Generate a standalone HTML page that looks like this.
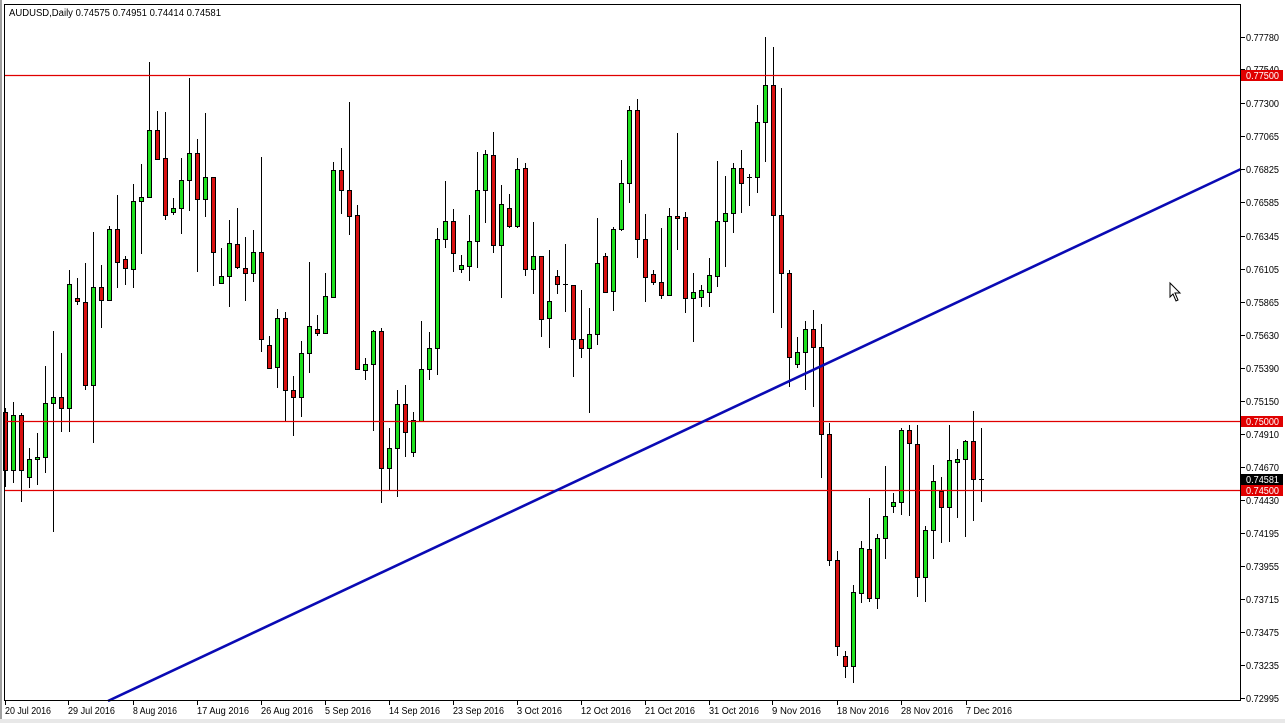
<!DOCTYPE html>
<html><head><meta charset="utf-8">
<style>
html,body{margin:0;padding:0;background:#fff;width:1285px;height:723px;overflow:hidden}
svg{display:block}
text{font-family:"Liberation Sans",sans-serif;font-size:10px;fill:#000}
</style></head><body>
<svg id="s" width="1285" height="723" xmlns="http://www.w3.org/2000/svg">
<rect x="0" y="0" width="1285" height="723" fill="#fff"/>
<rect x="0" y="0" width="2" height="723" fill="#a0a0a0"/>
<rect x="0" y="719" width="1285" height="4" fill="#e8e8e8"/>
<g id="c"></g>
<line x1="4" y1="75.5" x2="1241" y2="75.5" style="stroke:#e00000;stroke-width:1.2"/>
<line x1="4" y1="421.5" x2="1241" y2="421.5" style="stroke:#e00000;stroke-width:1.2"/>
<line x1="4" y1="490.5" x2="1241" y2="490.5" style="stroke:#e00000;stroke-width:1.2"/>
<line x1="108" y1="701" x2="1241" y2="169" stroke="#0a0ab4" stroke-width="2.6"/>
<rect x="4.5" y="4.5" width="1236" height="696" fill="none" stroke="#000" stroke-width="1"/>
<text x="9" y="16" textLength="212" lengthAdjust="spacingAndGlyphs">AUDUSD,Daily  0.74575 0.74951 0.74414 0.74581</text>
<g id="ax"></g>
<path d="M1170 283 L1170 297 L1173 294 L1176 301 L1178 300 L1175 293 L1180 293 Z" fill="#fff" stroke="#000" stroke-width="1"/>
</svg>
<script>
var d=[
['r',412,470,408,487],['g',415,470,402,483],['r',415,470,413,502],['g',459,477,448,488],['g',457,459,433,485],
['g',403,457,366,473],['g',397,403,331,532],['r',397,408,353,432],['g',284,408,270,432],['r',298,301,278,305],
['r',302,385,263,390],['g',287,385,232,443],['r',287,300,265,328],['g',229,300,226,301],['r',229,262,195,288],
['r',259,268,256,285],['g',201,269,184,288],['g',197,201,164,254],['g',130,197,62,197],['r',130,159,111,160],
['r',158,215,112,220],['g',208,212,198,215],['g',180,208,158,234],['g',153,180,78,211],['r',153,199,139,272],
['g',177,199,113,217],['r',177,252,177,286],['g',276,283,248,283],['g',243,276,220,307],['r',244,267,208,269],
['r',268,273,237,301],['g',252,273,230,282],['r',252,339,157,352],['r',345,368,336,368],['g',318,367,309,388],
['r',318,390,312,422],['r',390,397,376,436],['g',353,397,341,417],['g',326,353,262,373],['r',329,333,315,336],
['g',296,333,273,333],['g',170,297,162,297],['r',170,190,148,214],['r',190,216,102,235],['r',215,369,205,370],
['g',364,370,358,380],['g',331,364,330,431],['r',331,468,328,503],['g',448,468,428,490],['g',404,448,390,497],
['r',404,432,385,457],['g',420,452,412,457],['g',369,421,321,421],['g',348,369,332,380],['g',239,348,228,375],
['g',221,239,181,248],['r',221,253,209,272],['g',265,269,255,273],['g',241,266,215,281],['g',190,241,152,268],
['g',154,190,150,223],['r',155,245,132,253],['g',204,245,185,298],['r',208,226,194,228],['g',169,226,158,228],
['r',168,269,163,276],['g',256,269,222,294],['r',256,319,256,337],['g',301,318,250,348],['r',276,284,270,294],
['d',284,284,244,312],['r',285,339,285,377],['r',339,348,290,358],['g',334,348,308,413],['g',263,334,218,345],
['r',256,292,253,293],['g',229,291,227,311],['g',183,229,160,231],['g',110,183,106,203],['r',110,239,99,258],
['r',239,277,214,302],['r',274,282,270,285],['r',282,295,228,299],['g',216,295,208,295],['r',216,218,133,250],
['r',217,298,212,313],['g',292,298,273,342],['g',290,297,285,307],['g',275,292,258,307],['g',221,276,161,287],
['g',213,221,176,267],['g',168,213,163,233],['r',168,183,150,213],['d',177,177,174,206],['g',122,177,105,193],
['g',85,122,37,162],['r',85,215,47,313],['r',215,273,88,328],['r',273,357,270,387],['g',352,364,337,368],
['g',329,352,321,390],['r',329,347,310,407],['r',347,434,324,478],['r',434,560,423,566],['r',560,646,551,656],
['r',656,666,651,678],['g',592,666,585,683],['g',548,593,541,603],['r',549,598,498,602],['g',538,598,534,609],
['g',516,538,466,559],['g',502,506,493,513],['g',430,502,428,515],['r',430,443,425,516],['r',444,577,425,597],
['g',530,577,526,602],['g',481,530,465,559],['r',491,507,477,543],['g',460,507,425,542],['g',459,462,449,518],
['g',441,459,440,537],['r',441,479,411,521],['d',479,479,428,502]];
var h='';
for(var i=0;i<d.length;i++){var x=5+8*i,c=d[i];
h+='<line x1="'+(x+.5)+'" y1="'+c[3]+'" x2="'+(x+.5)+'" y2="'+c[4]+'" stroke="#000" stroke-width="1"/>';
if(c[0]=='d'){h+='<line x1="'+(x-2)+'" y1="'+(c[1]+.5)+'" x2="'+(x+3)+'" y2="'+(c[1]+.5)+'" stroke="#000"/>';}
else{var ht=Math.max(c[2]-c[1],2);h+='<rect x="'+(x-1.5)+'" y="'+(c[1]+.5)+'" width="4" height="'+ht+'" fill="'+(c[0]=='g'?'#1ee01e':'#d81010')+'" stroke="#000" stroke-width="1"/>';}}
document.getElementById('c').innerHTML=h;
var a='';
var L=[['0.77780',37],['0.77540',69],['0.77300',103],['0.77065',136],['0.76825',169],['0.76585',202],['0.76345',236],['0.76105',269],['0.75865',302],['0.75630',335],['0.75390',368],['0.75150',401],['0.74910',434],['0.74670',467],['0.74430',500],['0.74195',533],['0.73955',566],['0.73715',599],['0.73475',632],['0.73235',665],['0.72995',698]];
L.forEach(function(l){a+='<line x1="1241" y1="'+(l[1]+.5)+'" x2="1245" y2="'+(l[1]+.5)+'" stroke="#000"/><text x="1246" y="'+(l[1]+4)+'" textLength="33" lengthAdjust="spacingAndGlyphs">'+l[0]+'</text>';});
function tag(y,t,col){return '<rect x="1241" y="'+(y-5)+'" width="42" height="11" fill="'+col+'"/><text x="1246" y="'+(y+4)+'" textLength="33" lengthAdjust="spacingAndGlyphs" style="fill:#fff">'+t+'</text>';}
a+=tag(75,'0.77500','#e00000')+tag(421,'0.75000','#e00000')+tag(479,'0.74581','#000')+tag(490,'0.74500','#e00000');
var D=[['20 Jul 2016',5,46],['29 Jul 2016',68,47],['8 Aug 2016',133,44],['17 Aug 2016',197,52],['26 Aug 2016',261,52],['5 Sep 2016',325,46],['14 Sep 2016',389,51],['23 Sep 2016',453,51],['3 Oct 2016',517,45],['12 Oct 2016',581,50],['21 Oct 2016',645,50],['31 Oct 2016',709,50],['9 Nov 2016',772,49],['18 Nov 2016',837,52],['28 Nov 2016',901,52],['7 Dec 2016',966,46]];
D.forEach(function(l){a+='<line x1="'+(l[1]+.5)+'" y1="701" x2="'+(l[1]+.5)+'" y2="705" stroke="#000"/><text x="'+(l[1])+'" y="714" textLength="'+l[2]+'" lengthAdjust="spacingAndGlyphs">'+l[0]+'</text>';});
document.getElementById('ax').innerHTML=a;
</script>
</body></html>
